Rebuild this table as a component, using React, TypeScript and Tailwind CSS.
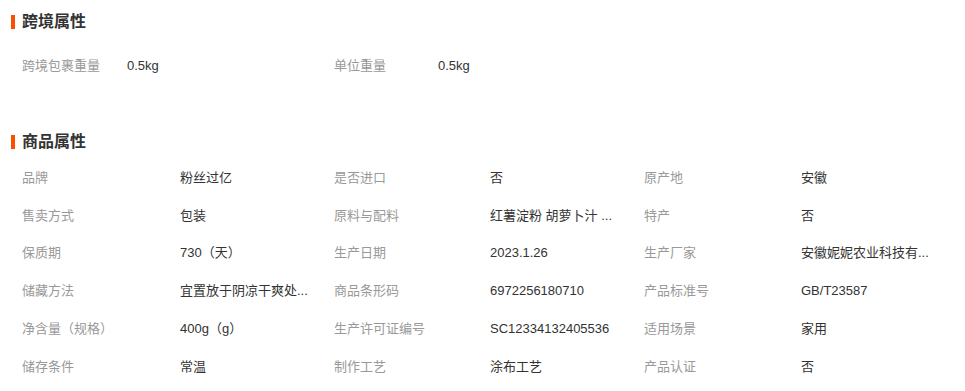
import React from 'react';

type Attr = { label: string; value: string };

const crossBorder: Attr[] = [
  { label: '跨境包裹重量', value: '0.5kg' },
  { label: '单位重量', value: '0.5kg' },
];

const productAttrs: Attr[] = [
  { label: '品牌', value: '粉丝过亿' },
  { label: '是否进口', value: '否' },
  { label: '原产地', value: '安徽' },
  { label: '售卖方式', value: '包装' },
  { label: '原料与配料', value: '红薯淀粉 胡萝卜汁 ...' },
  { label: '特产', value: '否' },
  { label: '保质期', value: '730（天）' },
  { label: '生产日期', value: '2023.1.26' },
  { label: '生产厂家', value: '安徽妮妮农业科技有...' },
  { label: '储藏方法', value: '宜置放于阴凉干爽处...' },
  { label: '商品条形码', value: '6972256180710' },
  { label: '产品标准号', value: 'GB/T23587' },
  { label: '净含量（规格）', value: '400g（g）' },
  { label: '生产许可证编号', value: 'SC12334132405536' },
  { label: '适用场景', value: '家用' },
  { label: '储存条件', value: '常温' },
  { label: '制作工艺', value: '涂布工艺' },
  { label: '产品认证', value: '否' },
];

const SectionTitle = ({ children }: { children: React.ReactNode }) => (
  <div className="flex items-center h-[28px] pl-[11px]">
    <span className="w-[4px] h-[14px] bg-[#ff4d00] mr-[7px]" />
    <h2 className="text-[16px] font-bold text-[#333] leading-none">{children}</h2>
  </div>
);

export default function App() {
  return (
    <div
      className="w-[965px] h-[391px] bg-white overflow-hidden text-[13px]"
      style={{ fontFamily: '"Liberation Sans", "Noto Sans CJK SC", sans-serif' }}
    >
      <section className="pt-[8px]">
        <SectionTitle>跨境属性</SectionTitle>
        <div className="mt-[11px] pl-[22px] grid grid-cols-[105px_207px_104px_1fr]">
          {crossBorder.map((a) => (
            <React.Fragment key={a.label}>
              <div className="h-[38px] flex items-center text-[#999]">{a.label}</div>
              <div className="h-[38px] flex items-center text-[#333]">{a.value}</div>
            </React.Fragment>
          ))}
        </div>
      </section>

      <section className="mt-[43px]">
        <SectionTitle>商品属性</SectionTitle>
        <div className="mt-[3px] pl-[22px] grid grid-cols-[158px_154px_156px_154px_157px_1fr]">
          {productAttrs.map((a) => (
            <React.Fragment key={a.label}>
              <div className="h-[37.7px] flex items-center text-[#999] whitespace-nowrap">{a.label}</div>
              <div className="h-[37.7px] flex items-center text-[#333] whitespace-nowrap">{a.value}</div>
            </React.Fragment>
          ))}
        </div>
      </section>
    </div>
  );
}
